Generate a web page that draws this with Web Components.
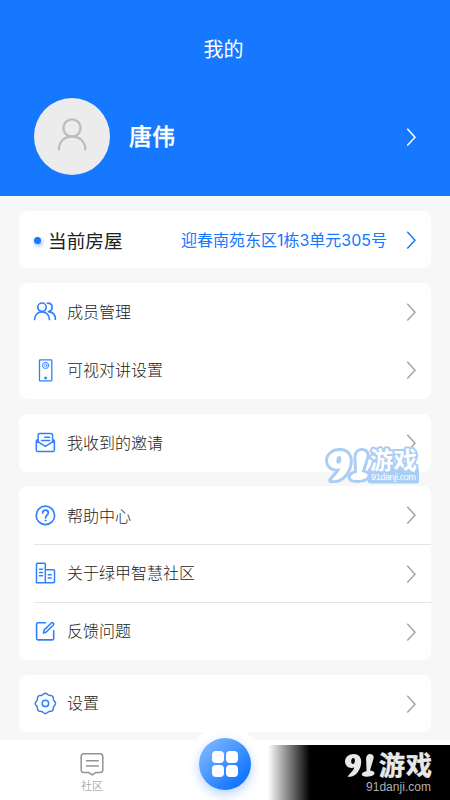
<!DOCTYPE html>
<html lang="zh-CN">
<head>
<meta charset="utf-8">
<title>我的</title>
<style>
html,body{margin:0;padding:0}
body{width:450px;height:800px;overflow:hidden;background:#f7f7f7;font-family:"Noto Sans CJK SC",sans-serif;color:#222}
</style>
</head>
<body>
<profile-page></profile-page>
<script>
// Gear outline: a circle whose radius ripples eight times.
const gear = 'M' + Array.from({length:96}, (_, i) => {
  const a = i / 96 * Math.PI * 2, r = 9.5 + 0.6 * Math.cos(8 * a);
  return (13.4 + r * Math.cos(a)).toFixed(2) + ' ' + (13.4 + r * Math.sin(a)).toFixed(2);
}).join('L') + 'z';
const ICONS = {
  members: '<g stroke-width="1.7"><circle cx="10" cy="8.2" r="4.2"/><path d="M2.6 20.5c0-4.500 3.2-7.600 7.400-7.600s7.400 3.100 7.400 7.600M15.500 4.100c3 0 4.600 1.700 4.600 4.100 0 2.300-1.600 4-3.600 4.400 4.200.5 6.900 3.400 6.900 7.600"/></g>',
  intercom: '<g stroke-width="1.3"><rect x="7.500" y="2.900" width="12.300" height="21" rx=".6"/><circle cx="13.600" cy="8.400" r="3.100" stroke-width="1"/><circle cx="13.600" cy="8.400" r="1.300" stroke-width=".7"/><circle cx="13.600" cy="21" r="1.100" fill="currentColor" stroke-width=".7"/></g>',
  invite: '<g stroke-width="1.5"><path d="M6.2 11.500V5.100c0-1.200.5-1.700 1.700-1.700h11c1.200 0 1.700.5 1.700 1.700v6.400M12.700 7.300h5M9.500 10.400h8.200"/><path d="M6 9.700c-1.200 0-1.700.7-1.700 1.900v8.300c0 1 .6 1.600 1.600 1.600h14.900c1 0 1.600-.6 1.600-1.600v-8.300c0-1.200-.5-1.900-1.700-1.900M4.600 10.800l8.800 5.600 8.800-5.600"/></g>',
  help: '<g stroke-width="1.7"><circle cx="13.4" cy="13.4" r="9.2"/><path d="M10.7 11.100c0-1.800 1.100-2.900 2.800-2.900s2.800 1.100 2.800 2.600c0 2.100-2.800 2.400-2.800 5"/><circle cx="13.5" cy="18.500" r=".6" fill="currentColor" stroke-width=".8"/></g>',
  building: '<g stroke-width="1.5"><path d="M4.5 22.8V4.2c0-.6.4-1 1-1h6.8c.6 0 1 .4 1 1v18.6M13.3 9.7h8.2c.6 0 1 .4 1 1v11.1c0 .6-.4 1-1 1h-16c-.6 0-1-.4-1-1M7.500 9.2h3M7.500 12.5h3M7.500 15.8h3M16.200 14.8h3M16.200 18h3"/></g>',
  edit: '<g stroke-width="1.6"><path d="M13.5 4.7H5.9c-.9 0-1.3.4-1.3 1.3v14.6c0 .9.4 1.3 1.3 1.3h14.5c.9 0 1.3-.4 1.3-1.3v-7.8M11.6 15.1l.7-3.2 7-6.9c1.5-1.2 3.2.6 2 2l-7 7z"/></g>',
  settings: `<g stroke-width="1.5"><path d="${gear}"/><circle cx="13.4" cy="13.4" r="3.2"/></g>`,
  user: '<g stroke-width="2.3"><circle cx="18" cy="11" r="8.6"/><path d="M4.9 32.500c0-8 5.500-13 13.100-13s13.300 5 13.300 13"/></g>',
  chat: '<g stroke-width="1.5"><path d="M5 1.800h16c1.800 0 2.800 1 2.800 2.800v13.200c0 1.800-1 2.800-2.800 2.800h-4.300l-3.400 2.300-3.400-2.300H5c-1.800 0-2.800-1-2.800-2.800V4.600c0-1.800 1-2.800 2.800-2.800zM7.500 8.800h11.800M7.500 14h11.800"/></g>'
};
const NINETY_ONE = '<path fill-rule="evenodd" d="M9 0C14 0 17 3.500 16.500 9 16 16 11 22.500 5 22.800H2.500L7 17.500C8 16.500 9 15 9.500 13.500 4 15 0 12 0 7.500 0 3 4 0 9 0zM8.500 4C6 4 5.500 10 8 10S11 4 8.500 4z"/><path d="M25.500 0C28.500 0 30 2 29 5L25.500 16.500C31.500 17 31.500 21 26 22.300 20 23.500 16 22 17.500 19.500 18.500 18 20 17.500 22 17L21.500 5C21.500 2 23 0 25.500 0z"/>';
function define(name, css, html){
  customElements.define(name, class extends HTMLElement{
    constructor(){
      super();
      const root = this.attachShadow({mode:'open'});
      root.innerHTML = '<style>' + css + '</style>' + (typeof html === 'function' ? html(this) : html);
    }
  });
}
define('line-icon', ':host{display:block;flex:none;width:27px;height:27px;color:#2f80ff}svg{display:block;width:100%;height:100%;overflow:visible}',
  el => `<svg viewBox="0 0 ${el.getAttribute('box') || '27 27'}" fill="none" stroke="currentColor" stroke-linecap="round" stroke-linejoin="round">${ICONS[el.getAttribute('name')]}</svg>`);
define('chevron-right', ':host{display:block;flex:none;width:10px;height:20px;color:#a6a6a6}svg{display:block}',
  '<svg width="10" height="20" viewBox="0 0 10 20" fill="none" stroke="currentColor" stroke-width="1.5"><path d="M1.300 1.800L9 10.200 1.300 18.600"/></svg>');
define('page-header', `:host{display:flex;flex-direction:column;height:196px;background:#1677ff;color:#fff}
h1{margin:34px 0 0;font-size:20px;line-height:30px;font-weight:400;text-align:center;text-indent:-3px}
.row{display:flex;align-items:center;margin-top:34px;height:77px;padding:0 34px}
.avatar{width:76px;height:77px;border-radius:50%;background:#ececec;display:grid;place-items:center}
.avatar line-icon{width:36px;height:36px;color:#bcbcbc;margin-bottom:3px}
b{font-size:23px;line-height:34px;font-weight:500;-webkit-text-stroke:.35px #fff;margin:0 0 4px 19px;flex:1}
chevron-right{color:#fff}`,
`<h1>我的</h1><div class="row"><div class="avatar"><line-icon name="user" box="36 36"></line-icon></div><b>唐伟</b><chevron-right></chevron-right></div>`);
define('menu-card', ':host{display:flex;flex-direction:column;background:#fff;border-radius:8px;margin:0 19px}', '<slot></slot>');
define('menu-row', `:host{display:flex;align-items:center;flex:1;margin-left:15px;padding-right:15px;font-size:16px;font-weight:300;min-height:0;box-sizing:border-box}
:host([line]){border-bottom:1px solid #e4e4e4}
span{flex:1;margin-left:6px;line-height:24px;padding-bottom:var(--lift,3px)}line-icon{margin-left:-2px;margin-right:2px}`,
el => `<line-icon name="${el.getAttribute('icon')}"></line-icon><span><slot></slot></span><chevron-right></chevron-right>`);
define('house-row', `:host{display:flex;align-items:center;flex:1;padding:0 15px}
i{width:7px;height:7px;border-radius:50%;background:#1677ff;box-shadow:1px 2px 4px #1677ff88;margin-top:2px}
b{font-size:18.700px;font-weight:400;line-height:28px;margin-left:7px;flex:1}
span{font-family:Inter,"Noto Sans CJK SC",sans-serif;font-size:16px;color:#1677ff;margin-right:19px;line-height:24px}
chevron-right{color:#1677ff}`, '<i></i><b><slot name="label"></slot></b><span><slot></slot></span><chevron-right></chevron-right>');
define('site-mark', `:host{display:block}svg{display:block;overflow:visible}
text{font-family:"Noto Sans CJK SC",sans-serif;font-weight:700}.url{font-family:"Liberation Sans",sans-serif;font-weight:400}`,
el => el.hasAttribute('outlined') ?
`<svg width="98" height="40" viewBox="0 0 98 40"><rect x="44" y="22" width="51" height="15.500" rx="2" fill="#a9cdf3"/><g fill="#fff" stroke="#a9cdf3" stroke-linejoin="round" paint-order="stroke"><g transform="translate(4 5) scale(1.320 1.280)" stroke-width="4.500">${NINETY_ONE}</g><text x="46" y="23" font-size="23.500" textLength="47" stroke-width="4">游戏</text></g><text class="url" x="47" y="34.300" font-size="9" textLength="45" fill="#fff">91danji.com</text></svg>` :
`<svg width="90" height="44" viewBox="0 0 90 44"><g fill="#e8e8e8"><g transform="translate(0 2) scale(.98 1)">${NINETY_ONE}</g><text x="34" y="23" font-size="26" textLength="53" stroke="#e8e8e8" stroke-width=".5">游戏</text></g><text class="url" x="21" y="38.500" font-size="12" textLength="65" fill="#b0b0b0">91danji.com</text></svg>`);
define('round-action', `:host{display:grid;place-items:center;width:76px;height:76px;border-radius:50%;background:#fff}
div{display:grid;grid-template-columns:12px 12px;gap:2px;place-content:center;width:52px;height:52px;border-radius:50%;background:linear-gradient(135deg,#86bdff 4%,#1677ff 80%);box-shadow:0 4px 11px #1677ff50}
i{width:12px;height:12px;border-radius:4px;background:#fff}`, '<div><i></i><i></i><i></i><i></i></div>');
define('tab-bar', `:host{display:block;position:relative;height:60px;background:#fff;flex:none}
.tab{width:184px;display:flex;flex-direction:column;align-items:center;padding-top:12px;font-size:11px;line-height:14px;color:#8c8c8c;font-weight:300}
.tab line-icon{width:26px;height:26px;color:#929292}
round-action{position:absolute;left:187px;top:-14px}
.brand{position:absolute;left:268px;right:0;top:5px;bottom:0;background:linear-gradient(90deg,#fff0,#000 42px)}
.brand site-mark{position:absolute;left:77px;top:7px}`,
`<div class="tab"><line-icon name="chat" box="26 26"></line-icon>社区</div><round-action></round-action><div class="brand"><site-mark></site-mark></div>`);
define('profile-page', `:host{display:flex;flex-direction:column;width:450px;height:800px;position:relative}
main{flex:1;display:flex;flex-direction:column;padding-top:15px;box-sizing:border-box}
.a{height:57px}.b{height:116px;margin-top:15px}.c{height:58px;margin-top:15px}.d{height:174px;margin-top:14px}.e{height:57px;margin-top:15px}
.d menu-row{flex:none;height:58px}.d menu-row:first-child{height:59px;--lift:0px}.d menu-row:last-child{height:57px}
.mark{position:absolute;left:324px;top:446px}`,
`<page-header></page-header><main>
<menu-card class="a"><house-row><span slot="label">当前房屋</span>迎春南苑东区1栋3单元305号</house-row></menu-card>
<menu-card class="b"><menu-row icon="members">成员管理</menu-row><menu-row icon="intercom">可视对讲设置</menu-row></menu-card>
<menu-card class="c"><menu-row icon="invite">我收到的邀请</menu-row></menu-card>
<menu-card class="d"><menu-row icon="help" line>帮助中心</menu-row><menu-row icon="building" line>关于绿甲智慧社区</menu-row><menu-row icon="edit">反馈问题</menu-row></menu-card>
<menu-card class="e"><menu-row icon="settings">设置</menu-row></menu-card></main>
<tab-bar></tab-bar><site-mark class="mark" outlined></site-mark>`);
</script>
</body>
</html>
